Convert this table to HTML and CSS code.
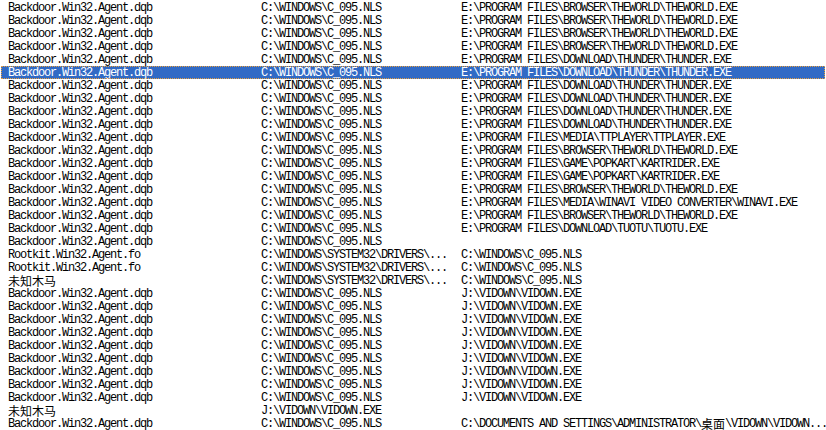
FILE: index.html
```html
<!DOCTYPE html>
<html lang="zh-CN">
<head>
    <meta charset="UTF-8">
    <title>Scan log</title>
    <link rel="stylesheet" href="styles.css">
</head>
<body>
    <div class="list">
        <div class="row"><span>Backdoor.Win32.Agent.dqb</span><span>C:\WINDOWS\C_095.NLS</span><span>E:\PROGRAM FILES\BROWSER\THEWORLD\THEWORLD.EXE</span></div>
        <div class="row"><span>Backdoor.Win32.Agent.dqb</span><span>C:\WINDOWS\C_095.NLS</span><span>E:\PROGRAM FILES\BROWSER\THEWORLD\THEWORLD.EXE</span></div>
        <div class="row"><span>Backdoor.Win32.Agent.dqb</span><span>C:\WINDOWS\C_095.NLS</span><span>E:\PROGRAM FILES\BROWSER\THEWORLD\THEWORLD.EXE</span></div>
        <div class="row"><span>Backdoor.Win32.Agent.dqb</span><span>C:\WINDOWS\C_095.NLS</span><span>E:\PROGRAM FILES\BROWSER\THEWORLD\THEWORLD.EXE</span></div>
        <div class="row"><span>Backdoor.Win32.Agent.dqb</span><span>C:\WINDOWS\C_095.NLS</span><span>E:\PROGRAM FILES\DOWNLOAD\THUNDER\THUNDER.EXE</span></div>
        <div class="row selected"><span>Backdoor.Win32.Agent.dqb</span><span>C:\WINDOWS\C_095.NLS</span><span>E:\PROGRAM FILES\DOWNLOAD\THUNDER\THUNDER.EXE</span></div>
        <div class="row"><span>Backdoor.Win32.Agent.dqb</span><span>C:\WINDOWS\C_095.NLS</span><span>E:\PROGRAM FILES\DOWNLOAD\THUNDER\THUNDER.EXE</span></div>
        <div class="row"><span>Backdoor.Win32.Agent.dqb</span><span>C:\WINDOWS\C_095.NLS</span><span>E:\PROGRAM FILES\DOWNLOAD\THUNDER\THUNDER.EXE</span></div>
        <div class="row"><span>Backdoor.Win32.Agent.dqb</span><span>C:\WINDOWS\C_095.NLS</span><span>E:\PROGRAM FILES\DOWNLOAD\THUNDER\THUNDER.EXE</span></div>
        <div class="row"><span>Backdoor.Win32.Agent.dqb</span><span>C:\WINDOWS\C_095.NLS</span><span>E:\PROGRAM FILES\DOWNLOAD\THUNDER\THUNDER.EXE</span></div>
        <div class="row"><span>Backdoor.Win32.Agent.dqb</span><span>C:\WINDOWS\C_095.NLS</span><span>E:\PROGRAM FILES\MEDIA\TTPLAYER\TTPLAYER.EXE</span></div>
        <div class="row"><span>Backdoor.Win32.Agent.dqb</span><span>C:\WINDOWS\C_095.NLS</span><span>E:\PROGRAM FILES\BROWSER\THEWORLD\THEWORLD.EXE</span></div>
        <div class="row"><span>Backdoor.Win32.Agent.dqb</span><span>C:\WINDOWS\C_095.NLS</span><span>E:\PROGRAM FILES\GAME\POPKART\KARTRIDER.EXE</span></div>
        <div class="row"><span>Backdoor.Win32.Agent.dqb</span><span>C:\WINDOWS\C_095.NLS</span><span>E:\PROGRAM FILES\GAME\POPKART\KARTRIDER.EXE</span></div>
        <div class="row"><span>Backdoor.Win32.Agent.dqb</span><span>C:\WINDOWS\C_095.NLS</span><span>E:\PROGRAM FILES\BROWSER\THEWORLD\THEWORLD.EXE</span></div>
        <div class="row"><span>Backdoor.Win32.Agent.dqb</span><span>C:\WINDOWS\C_095.NLS</span><span>E:\PROGRAM FILES\MEDIA\WINAVI VIDEO CONVERTER\WINAVI.EXE</span></div>
        <div class="row"><span>Backdoor.Win32.Agent.dqb</span><span>C:\WINDOWS\C_095.NLS</span><span>E:\PROGRAM FILES\BROWSER\THEWORLD\THEWORLD.EXE</span></div>
        <div class="row"><span>Backdoor.Win32.Agent.dqb</span><span>C:\WINDOWS\C_095.NLS</span><span>E:\PROGRAM FILES\DOWNLOAD\TUOTU\TUOTU.EXE</span></div>
        <div class="row"><span>Backdoor.Win32.Agent.dqb</span><span>C:\WINDOWS\C_095.NLS</span><span></span></div>
        <div class="row"><span>Rootkit.Win32.Agent.fo</span><span>C:\WINDOWS\SYSTEM32\DRIVERS\...</span><span>C:\WINDOWS\C_095.NLS</span></div>
        <div class="row"><span>Rootkit.Win32.Agent.fo</span><span>C:\WINDOWS\SYSTEM32\DRIVERS\...</span><span>C:\WINDOWS\C_095.NLS</span></div>
        <div class="row"><span><span class="cjk">未知木马</span></span><span>C:\WINDOWS\SYSTEM32\DRIVERS\...</span><span>C:\WINDOWS\C_095.NLS</span></div>
        <div class="row"><span>Backdoor.Win32.Agent.dqb</span><span>C:\WINDOWS\C_095.NLS</span><span>J:\VIDOWN\VIDOWN.EXE</span></div>
        <div class="row"><span>Backdoor.Win32.Agent.dqb</span><span>C:\WINDOWS\C_095.NLS</span><span>J:\VIDOWN\VIDOWN.EXE</span></div>
        <div class="row"><span>Backdoor.Win32.Agent.dqb</span><span>C:\WINDOWS\C_095.NLS</span><span>J:\VIDOWN\VIDOWN.EXE</span></div>
        <div class="row"><span>Backdoor.Win32.Agent.dqb</span><span>C:\WINDOWS\C_095.NLS</span><span>J:\VIDOWN\VIDOWN.EXE</span></div>
        <div class="row"><span>Backdoor.Win32.Agent.dqb</span><span>C:\WINDOWS\C_095.NLS</span><span>J:\VIDOWN\VIDOWN.EXE</span></div>
        <div class="row"><span>Backdoor.Win32.Agent.dqb</span><span>C:\WINDOWS\C_095.NLS</span><span>J:\VIDOWN\VIDOWN.EXE</span></div>
        <div class="row"><span>Backdoor.Win32.Agent.dqb</span><span>C:\WINDOWS\C_095.NLS</span><span>J:\VIDOWN\VIDOWN.EXE</span></div>
        <div class="row"><span>Backdoor.Win32.Agent.dqb</span><span>C:\WINDOWS\C_095.NLS</span><span>J:\VIDOWN\VIDOWN.EXE</span></div>
        <div class="row"><span>Backdoor.Win32.Agent.dqb</span><span>C:\WINDOWS\C_095.NLS</span><span>J:\VIDOWN\VIDOWN.EXE</span></div>
        <div class="row"><span><span class="cjk">未知木马</span></span><span>J:\VIDOWN\VIDOWN.EXE</span><span></span></div>
        <div class="row"><span>Backdoor.Win32.Agent.dqb</span><span>C:\WINDOWS\C_095.NLS</span><span>C:\DOCUMENTS AND SETTINGS\ADMINISTRATOR\<span class="cjk">桌面</span>\VIDOWN\VIDOWN...</span></div>
    </div>
</body>
</html>
```

FILE: styles.css
```css
* {
    margin: 0px;
    padding: 0px;
    box-sizing: border-box;
}

body {
    background: #fff;
    color: #000;
    overflow: hidden;
}

.list {
    padding-top: 1px;
}

.row {
    display: grid;
    grid-template-columns: 253px 200px 1fr;
    height: 13px;
    margin: 0 1px;
    padding-left: 7px;
    font-family: "Liberation Mono", "Noto Sans CJK SC", monospace;
    font-size: 12px;
    line-height: 13px;
    letter-spacing: -1.2px;
    white-space: nowrap;
}

.row > span {
    display: block;
    height: 13px;
    padding-top: 2px;
    line-height: 11px;
}

.cjk {
    display: inline-block;
    height: 13px;
    margin-top: -2px;
    font-family: "Noto Sans CJK SC", sans-serif;
    font-size: 12px;
    line-height: 13px;
    letter-spacing: 0px;
    vertical-align: top;
}

.selected {
    background: #316ac5;
    color: #fff;
    outline: 1px dotted #e8a040;
    outline-offset: -1px;
}
```
